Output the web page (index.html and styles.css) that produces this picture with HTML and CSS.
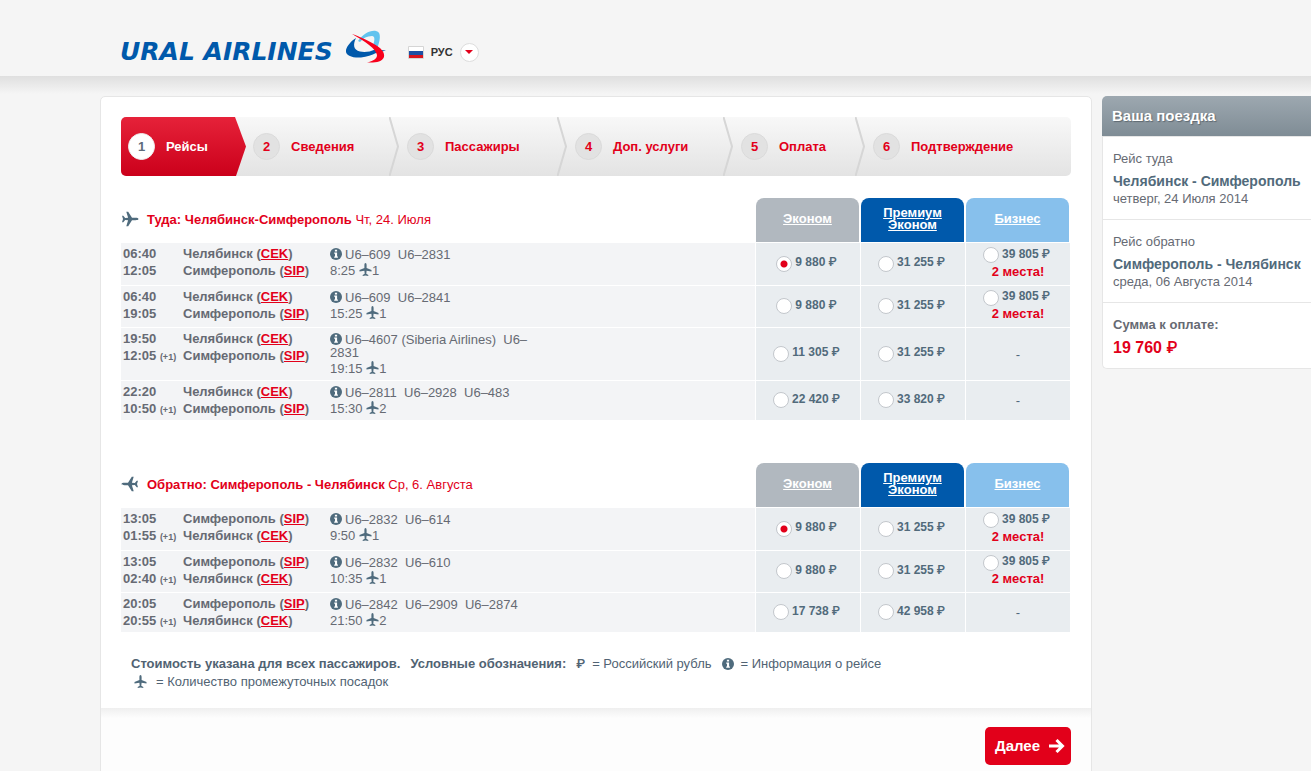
FILE: index.html
```html
<!DOCTYPE html>
<html lang="ru">
<head>
<meta charset="utf-8">
<title>Ural Airlines</title>
<link rel="stylesheet" href="styles.css">
</head>
<body>
<svg class="sprite" aria-hidden="true">
  <symbol id="plane" viewBox="0 0 13 13">
    <path d="M6.500 0C7.200 0 7.600 .9 7.600 2V5L12.500 7V8.500L7.600 7.700L7.300 10.700L9.300 11.900V13L6.500 12.500L3.700 13V11.900L5.700 10.700L5.400 7.700L.5 8.500V7L5.400 5V2C5.400 .9 5.800 0 6.500 0Z" fill="currentColor"/>
  </symbol>
  <symbol id="jet" viewBox="0 0 18 18">
    <path d="M17.500 9C17.500 9.800 16.200 10.200 14.500 10.200H11L7.200 16.200H5.300L7.100 10.200L4.200 10L2.300 12.300H1L2 9L1 5.700H2.300L4.200 8L7.100 7.800L5.300 1.800H7.200L11 7.800H14.500C16.200 7.800 17.500 8.200 17.500 9Z" fill="currentColor"/>
  </symbol>
  <symbol id="info" viewBox="0 0 12 12">
    <circle cx="6" cy="6" r="6" fill="currentColor"/>
    <path d="M4.900 1.700H7.100V3.600H4.900ZM4.200 4.500H7.100V8.400H7.900V9.700H4.200V8.400H5V5.700H4.200Z" fill="#fff"/>
  </symbol>
</svg>

<header class="top">
  <a class="logo" href="#" aria-label="Ural Airlines">
    <span class="logo-text">URAL AIRLINES</span>
    <svg class="logo-mark" viewBox="0 0 42 34" aria-hidden="true">
      <path d="M13 11C18 4 25 0 31 1C37 2 35 11 32 19L28 15.500C30 10 30 6 27 6C22 6 18 8 15 12Z" fill="#62c3ee"/>
      <path d="M11 8C6 11 2 16 1 20C0 26 8 28 16 27.500C22 27 27 25 31 23L41 20.500L30 19.500C25 22 19 22.500 15 21.500C8 20 8 14 11 8Z" fill="#0059ab"/>
      <path d="M7 4C13 6 22 10 29 14C36 18 40 22 39 27C37 32 30 33 22 32.500C28 31 32 29 32 25C31 19 21 12 7 4Z" fill="#f8001c"/>
    </svg>
  </a>
  <button class="lang" type="button">
    <svg class="flag" viewBox="0 0 16 13" aria-hidden="true">
      <rect width="16" height="13" rx="1" fill="#d5d5d5"/>
      <rect x="1" y="1" width="14" height="4" fill="#fff"/>
      <rect x="1" y="5" width="14" height="4" fill="#1c50a4"/>
      <rect x="1" y="9" width="14" height="3" fill="#d8151d"/>
    </svg>
    <span>РУС</span>
    <span class="lang-arrow"><svg viewBox="0 0 8 4" aria-hidden="true"><path d="M0 0H8L4 4Z" fill="#e2001a"/></svg></span>
  </button>
</header>

<div class="page">
  <main class="card">
    <div class="card-body">
      <ol class="steps">
        <li class="step step-active"><span class="step-num">1</span>Рейсы</li>
        <li class="step"><span class="step-num">2</span>Сведения<svg class="chevron" viewBox="0 0 10 59" aria-hidden="true"><path d="M.5 0L9 29.500L.5 59"/></svg></li>
        <li class="step"><span class="step-num">3</span>Пассажиры<svg class="chevron" viewBox="0 0 10 59" aria-hidden="true"><path d="M.5 0L9 29.500L.5 59"/></svg></li>
        <li class="step"><span class="step-num">4</span>Доп. услуги<svg class="chevron" viewBox="0 0 10 59" aria-hidden="true"><path d="M.5 0L9 29.500L.5 59"/></svg></li>
        <li class="step"><span class="step-num">5</span>Оплата<svg class="chevron" viewBox="0 0 10 59" aria-hidden="true"><path d="M.5 0L9 29.500L.5 59"/></svg></li>
        <li class="step"><span class="step-num">6</span>Подтверждение</li>
      </ol>

      <table class="flights">
        <colgroup><col class="c-time"><col class="c-city"><col><col class="c-fare"><col class="c-fare"><col class="c-fare"></colgroup>
        <thead>
          <tr>
            <th class="title" colspan="3"><svg class="jet" aria-hidden="true"><use href="#jet"/></svg>Туда: Челябинск-Симферополь <span class="date">Чт, 24. Июля</span></th>
            <th class="tab"><a class="eco" href="#">Эконом</a></th>
            <th class="tab"><a class="prem" href="#">Премиум Эконом</a></th>
            <th class="tab"><a class="biz" href="#">Бизнес</a></th>
          </tr>
        </thead>
        <tbody>
          <tr>
            <td class="time">06:40<br>12:05</td>
            <td class="city">Челябинск (<a href="#">CEK</a>)<br>Симферополь (<a href="#">SIP</a>)</td>
            <td class="route"><div class="nums"><svg class="info"><use href="#info"/></svg>U6–609&nbsp; U6–2831</div><div>8:25 <svg class="plane"><use href="#plane"/></svg>1</div></td>
            <td class="fare"><label><input type="radio" name="out" checked>9 880 <i>₽</i></label></td>
            <td class="fare"><label><input type="radio" name="out">31 255 <i>₽</i></label></td>
            <td class="fare"><label><input type="radio" name="out">39 805 <i>₽</i></label><div class="left">2 места!</div></td>
          </tr>
          <tr>
            <td class="time">06:40<br>19:05</td>
            <td class="city">Челябинск (<a href="#">CEK</a>)<br>Симферополь (<a href="#">SIP</a>)</td>
            <td class="route"><div class="nums"><svg class="info"><use href="#info"/></svg>U6–609&nbsp; U6–2841</div><div>15:25 <svg class="plane"><use href="#plane"/></svg>1</div></td>
            <td class="fare"><label><input type="radio" name="out">9 880 <i>₽</i></label></td>
            <td class="fare"><label><input type="radio" name="out">31 255 <i>₽</i></label></td>
            <td class="fare"><label><input type="radio" name="out">39 805 <i>₽</i></label><div class="left">2 места!</div></td>
          </tr>
          <tr>
            <td class="time">19:50<br>12:05 <small>(+1)</small></td>
            <td class="city">Челябинск (<a href="#">CEK</a>)<br>Симферополь (<a href="#">SIP</a>)</td>
            <td class="route"><div class="nums"><svg class="info"><use href="#info"/></svg>U6–4607 (Siberia Airlines)&nbsp; U6–<wbr>2831</div><div>19:15 <svg class="plane"><use href="#plane"/></svg>1</div></td>
            <td class="fare"><label><input type="radio" name="out">11 305 <i>₽</i></label></td>
            <td class="fare"><label><input type="radio" name="out">31 255 <i>₽</i></label></td>
            <td class="fare none">-</td>
          </tr>
          <tr>
            <td class="time">22:20<br>10:50 <small>(+1)</small></td>
            <td class="city">Челябинск (<a href="#">CEK</a>)<br>Симферополь (<a href="#">SIP</a>)</td>
            <td class="route"><div class="nums"><svg class="info"><use href="#info"/></svg>U6–2811&nbsp; U6–2928&nbsp; U6–483</div><div>15:30 <svg class="plane"><use href="#plane"/></svg>2</div></td>
            <td class="fare"><label><input type="radio" name="out">22 420 <i>₽</i></label></td>
            <td class="fare"><label><input type="radio" name="out">33 820 <i>₽</i></label></td>
            <td class="fare none">-</td>
          </tr>
        </tbody>
      </table>

      <table class="flights">
        <colgroup><col class="c-time"><col class="c-city"><col><col class="c-fare"><col class="c-fare"><col class="c-fare"></colgroup>
        <thead>
          <tr>
            <th class="title" colspan="3"><svg class="jet jet-back" aria-hidden="true"><use href="#jet"/></svg>Обратно: Симферополь - Челябинск <span class="date">Ср, 6. Августа</span></th>
            <th class="tab"><a class="eco" href="#">Эконом</a></th>
            <th class="tab"><a class="prem" href="#">Премиум Эконом</a></th>
            <th class="tab"><a class="biz" href="#">Бизнес</a></th>
          </tr>
        </thead>
        <tbody>
          <tr>
            <td class="time">13:05<br>01:55 <small>(+1)</small></td>
            <td class="city">Симферополь (<a href="#">SIP</a>)<br>Челябинск (<a href="#">CEK</a>)</td>
            <td class="route"><div class="nums"><svg class="info"><use href="#info"/></svg>U6–2832&nbsp; U6–614</div><div>9:50 <svg class="plane"><use href="#plane"/></svg>1</div></td>
            <td class="fare"><label><input type="radio" name="back" checked>9 880 <i>₽</i></label></td>
            <td class="fare"><label><input type="radio" name="back">31 255 <i>₽</i></label></td>
            <td class="fare"><label><input type="radio" name="back">39 805 <i>₽</i></label><div class="left">2 места!</div></td>
          </tr>
          <tr>
            <td class="time">13:05<br>02:40 <small>(+1)</small></td>
            <td class="city">Симферополь (<a href="#">SIP</a>)<br>Челябинск (<a href="#">CEK</a>)</td>
            <td class="route"><div class="nums"><svg class="info"><use href="#info"/></svg>U6–2832&nbsp; U6–610</div><div>10:35 <svg class="plane"><use href="#plane"/></svg>1</div></td>
            <td class="fare"><label><input type="radio" name="back">9 880 <i>₽</i></label></td>
            <td class="fare"><label><input type="radio" name="back">31 255 <i>₽</i></label></td>
            <td class="fare"><label><input type="radio" name="back">39 805 <i>₽</i></label><div class="left">2 места!</div></td>
          </tr>
          <tr>
            <td class="time">20:05<br>20:55 <small>(+1)</small></td>
            <td class="city">Симферополь (<a href="#">SIP</a>)<br>Челябинск (<a href="#">CEK</a>)</td>
            <td class="route"><div class="nums"><svg class="info"><use href="#info"/></svg>U6–2842&nbsp; U6–2909&nbsp; U6–2874</div><div>21:50 <svg class="plane"><use href="#plane"/></svg>2</div></td>
            <td class="fare"><label><input type="radio" name="back">17 738 <i>₽</i></label></td>
            <td class="fare"><label><input type="radio" name="back">42 958 <i>₽</i></label></td>
            <td class="fare none">-</td>
          </tr>
        </tbody>
      </table>

      <div class="legend">
        <b>Стоимость указана для всех пассажиров.</b>
        <b>Условные обозначения:</b>
        <span class="key"><i>₽</i>= Российский рубль</span>
        <span class="key"><svg class="info"><use href="#info"/></svg>= Информация о рейсе</span>
        <span class="key key-plane"><svg class="plane"><use href="#plane"/></svg>= Количество промежуточных посадок</span>
      </div>
    </div>
    <div class="card-foot">
      <button class="next" type="button">Далее
        <svg viewBox="0 0 16 14" aria-hidden="true"><path d="M0 7H13M7.500 1L13.500 7L7.500 13" fill="none" stroke="#fff" stroke-width="3"/></svg>
      </button>
    </div>
  </main>

  <aside class="trip">
    <h2>Ваша поездка</h2>
    <section>
      <p class="way">Рейс туда</p>
      <h3>Челябинск - Симферополь</h3>
      <p>четверг, 24 Июля 2014</p>
    </section>
    <section>
      <p class="way">Рейс обратно</p>
      <h3>Симферополь - Челябинск</h3>
      <p>среда, 06 Августа 2014</p>
    </section>
    <section>
      <p class="way"><b>Сумма к оплате:</b></p>
      <p class="total">19 760 <i>₽</i></p>
    </section>
  </aside>
</div>
</body>
</html>
```
FILE: styles.css
```css
* { box-sizing: border-box; }
body {
  margin: 0;
  background: #f5f5f5;
  color: #666a73;
  font: 13px/17px "Liberation Sans", Arial, sans-serif;
}
h2, h3, p, ol { margin: 0; padding: 0; }
i { font-family: Roboto, "DejaVu Sans", sans-serif; font-style: normal; font-weight: 500; }
a { color: #e2001a; }
.sprite { display: none; }

.top {
  display: flex;
  align-items: center;
  gap: 21px;
  height: 76px;
  padding: 28px 20px 0 120px;
  background: #f5f5f5;
}
.logo { display: flex; align-items: center; gap: 12px; text-decoration: none; }
.logo-text {
  color: #0059ab;
  font: italic bold 25px/24px "DejaVu Sans", Verdana, sans-serif;
  white-space: nowrap;
}
.logo-mark { width: 42px; height: 34px; margin-top: -10px; }
.lang {
  display: flex;
  align-items: center;
  gap: 7px;
  padding: 0;
  border: 0;
  background: none;
  color: #333;
  font: bold 11px/18px "Liberation Sans", Arial, sans-serif;
}
.flag { width: 16px; height: 13px; }
.lang-arrow {
  display: flex;
  align-items: center;
  justify-content: center;
  width: 19px;
  height: 19px;
  border: 1px solid #ddd;
  border-radius: 50%;
  background: #fff;
}
.lang-arrow svg { width: 8px; height: 4px; }

.page {
  display: flex;
  align-items: flex-start;
  gap: 10px;
  padding: 20px 0 0 100px;
  background: linear-gradient(#dfdfdf, #f5f5f5 18px);
}
.card {
  flex: 1;
  min-width: 0;
  border: 1px solid #e6e6e6;
  border-radius: 5px;
  background: #fff;
}
.card-body { padding: 20px 20px 18px; }

.steps {
  display: grid;
  grid-template-columns: 125px 154px 168px 166px 132px 1fr;
  height: 59px;
  border-radius: 5px;
  overflow: hidden;
  background: linear-gradient(#f8f8f8, #e3e3e3);
  list-style: none;
}
.step {
  display: flex;
  align-items: center;
  gap: 11px;
  padding: 0 0 1px 7px;
  color: #e2001a;
  font-weight: bold;
  white-space: nowrap;
}
.step-active {
  background: linear-gradient(#e62239, #cb001b);
  color: #fff;
  clip-path: polygon(0 0, 114px 0, 125px 50%, 115px 100%, 0 100%);
}
.step-num {
  width: 27px;
  height: 27px;
  border: 1px solid #dadada;
  border-radius: 50%;
  background: #e2e2e2;
  line-height: 26px;
  text-align: center;
}
.step-active .step-num { border-color: #eee; background: #fff; color: #5d6b7b; }
.chevron {
  width: 10px;
  height: 59px;
  margin: 0 1px -1px auto;
  fill: none;
  stroke: #d6d6d6;
  stroke-width: 2px;
}

.flights { width: 100%; margin-top: 22px; border-spacing: 0; table-layout: fixed; }
.flights + .flights { margin-top: 42px; }
.c-time { width: 62px; }
.c-city { width: 147px; }
.c-fare { width: 105px; }
.flights th { padding: 0; }
.flights .title { padding-bottom: 4px; color: #e2001a; text-align: left; }
.date { font-weight: 400; }
.jet { width: 18px; height: 18px; margin-right: 8px; color: #4f6b7d; vertical-align: -4px; }
.jet-back { transform: rotate(180deg); }
.flights .tab { padding: 0 2px 1px 0; }
.tab a {
  display: flex;
  align-items: center;
  justify-content: center;
  height: 44px;
  padding: 0 20px 2px;
  border-radius: 8px 8px 0 0;
  color: #fff;
  line-height: 12px;
}
.eco { background: #b1b8bf; }
.prem { background: #0059ab; }
.biz { background: #87c0ec; }

.flights td {
  padding: 2px 0 3px 2px;
  border-bottom: 1px solid #fff;
  background: #f3f4f6;
  vertical-align: top;
}
.flights tr:nth-child(1) .time { padding-bottom: 6px; }
.flights tr:nth-child(2) .time { padding-bottom: 5px; }
.time, .city { font-weight: bold; white-space: nowrap; }
.flights .city { padding-left: 0; }
small { font-size: 9px; line-height: 10px; }
.flights .route { padding: 5px 224px 3px 0; border-right: 1px solid #fff; }
.nums { padding-bottom: 1px; line-height: 13px; }
.info { width: 12px; height: 12px; margin: -2px 3px -2px 0; color: #4f6b7d; vertical-align: 1px; }
.plane { width: 13px; height: 13px; margin: -2px 0; color: #4f6b7d; vertical-align: 1px; }
.flights .fare {
  padding: 0 0 3px;
  border-right: 1px solid #fff;
  background: #e9edf0;
  color: #516a7b;
  text-align: center;
  vertical-align: middle;
}
.flights .none { padding: 0; }
.fare label {
  display: flex;
  align-items: center;
  justify-content: center;
  gap: 3px;
  padding-right: 3px;
  font-size: 12px;
  font-weight: bold;
}
.fare input {
  appearance: none;
  width: 16px;
  height: 16px;
  margin: 1px 0 -1px;
  border: 1px solid #c3c7cc;
  border-radius: 50%;
  background: #fff;
}
.fare input:checked { background: radial-gradient(circle, #e2001a 3px, #fff 4px); }
.left { color: #e2001a; font-weight: bold; }

.legend {
  display: flex;
  flex-wrap: wrap;
  gap: 1px 10px;
  padding: 22px 10px 0;
  color: #516373;
}
.key { display: flex; align-items: center; gap: 7px; }
.key .info { margin: 0; }
.key-plane { gap: 9px; padding-left: 3px; }

.card-foot {
  display: flex;
  justify-content: flex-end;
  padding: 19px 20px;
  border-radius: 0 0 5px 5px;
  background: linear-gradient(#efefef, #fdfdfd 10px);
}
.next {
  display: flex;
  align-items: center;
  gap: 9px;
  height: 38px;
  padding: 0 6px 0 10px;
  border: 0;
  border-radius: 5px;
  background: #e2001a;
  color: #fff;
  font: bold 15px/20px "Liberation Sans", Arial, sans-serif;
}
.next svg { width: 16px; height: 14px; }

.trip { flex: 0 0 209px; white-space: nowrap; }
.trip h2 {
  height: 41px;
  padding-left: 10px;
  border-bottom: 1px solid #e6e6e6;
  border-radius: 5px 0 0 0;
  background: linear-gradient(#9da8b0, #7f8c95);
  color: #fff;
  font-size: 15px;
  line-height: 40px;
  text-shadow: 1px 1px 1px #5d6870;
}
.trip section {
  padding: 13px 0 12px 10px;
  border: solid #e6e6e6;
  border-width: 0 0 1px 1px;
  background: #fff;
}
.trip section:last-child { border-radius: 0 0 0 5px; }
.way { padding-bottom: 6px; }
.trip h3 { color: #516a7b; font-size: 14px; line-height: 17px; }
.trip .total { color: #e2001a; font-size: 16px; font-weight: bold; }
```
